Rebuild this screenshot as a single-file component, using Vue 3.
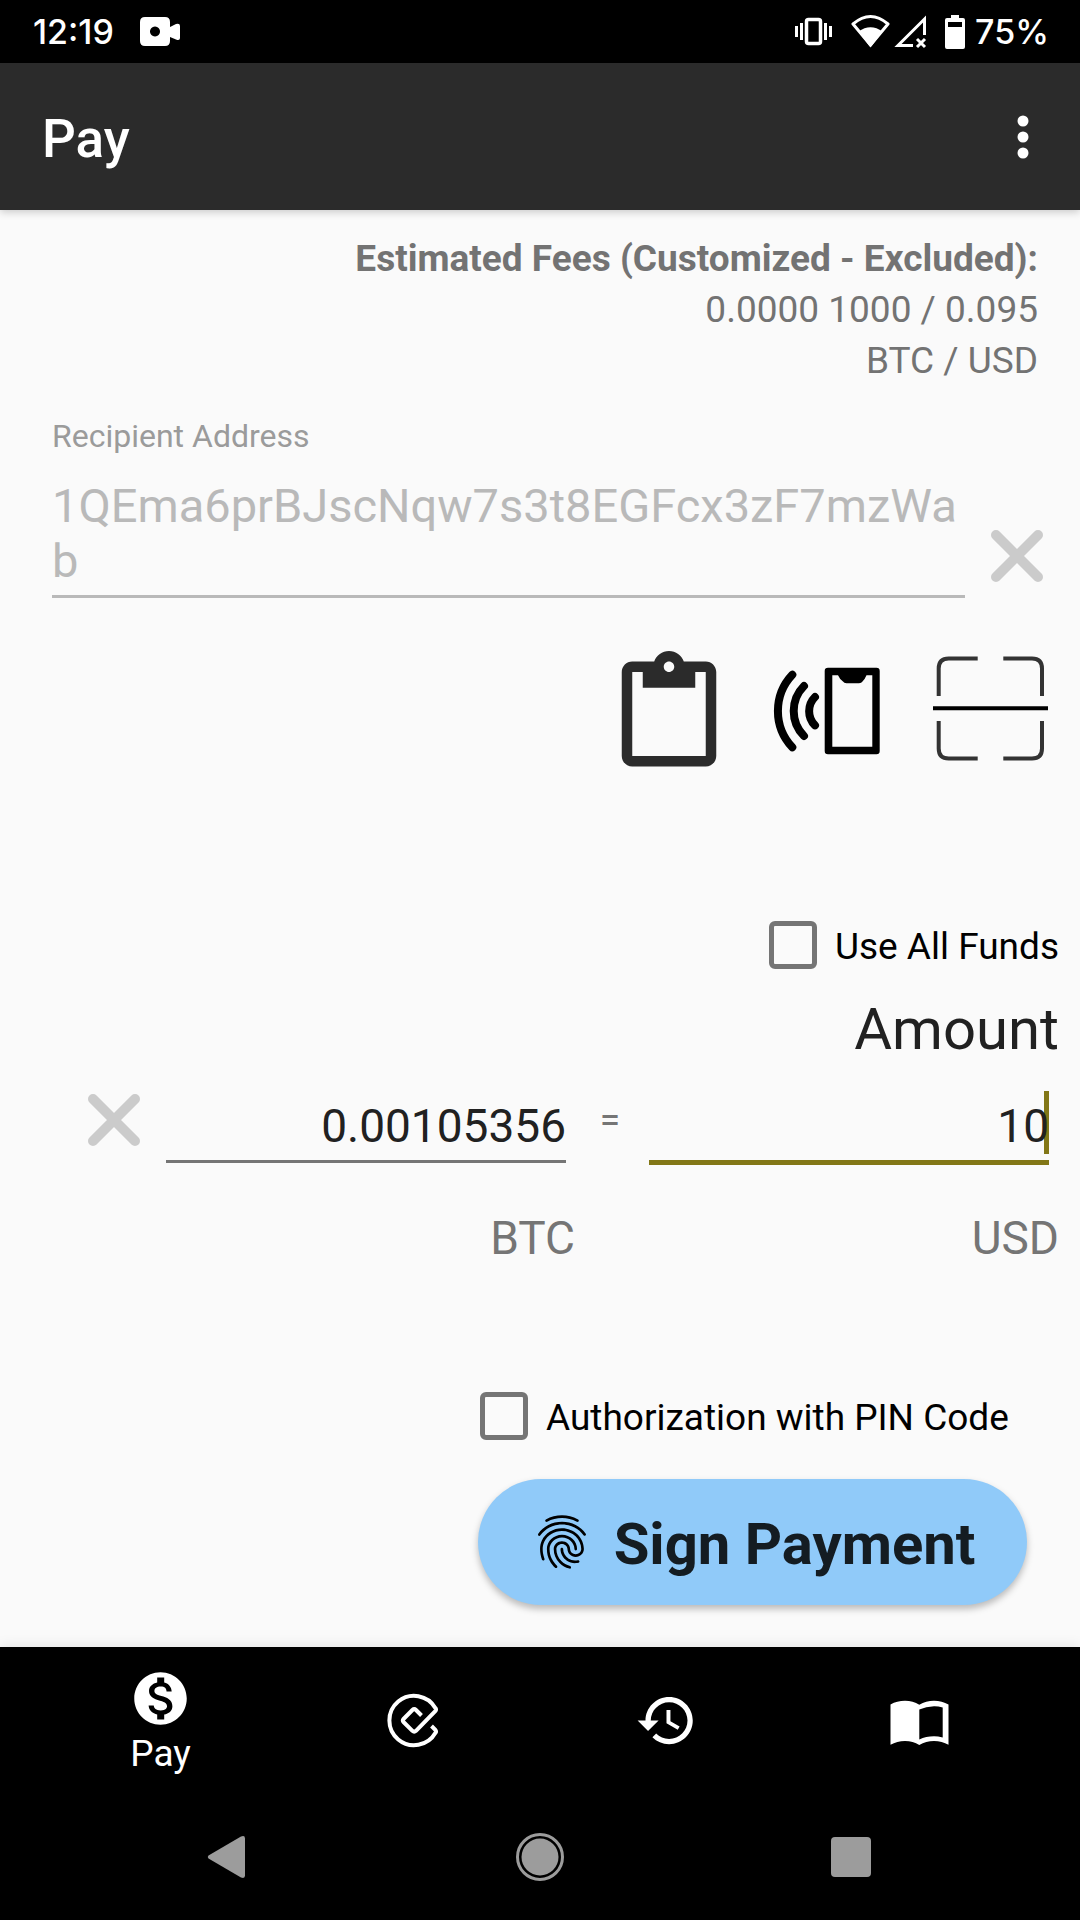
<script setup>
import { ref } from 'vue'

const address = ref('1QEma6prBJscNqw7s3t8EGFcx3zF7mzWab')
const btc = ref('0.00105356')
const usd = ref('10')
const useAll = ref(false)
const withPin = ref(false)
</script>

<template>
  <div class="screen">
    <div class="status">
      <div class="status-side">
        <span>12:19</span>
        <svg class="camera" width="40" height="34" viewBox="0 0 40 34" fill="#fff">
          <path fill-rule="evenodd" d="M5 2H25Q30 2 30 7V12L36 9Q40 8 40 11V23Q40 26 36 24.500L30 22V26Q30 31 25 31H5Q0 31 0 26V7Q0 2 5 2ZM15 11.500a5 5 0 1 0 .01 0Z" />
        </svg>
      </div>
      <div class="status-side">
        <svg width="38" height="36" viewBox="0 0 38 36" fill="#fff">
          <rect x="11.500" y="5.500" width="14" height="24" rx="2" fill="none" stroke="#fff" stroke-width="3.500" />
          <path d="M5 9h3v17H5zM0 12h3v11H0zM29 9h3v17h-3zM34 12h3v11h-3z" />
        </svg>
        <svg class="wifi" width="76" height="36" viewBox="0 0 76 36" fill="none" stroke="#fff">
          <path stroke-width="3" stroke-linejoin="round" d="M2 10Q19.500 -5 37 10L19.500 31Z" />
          <path fill="#fff" stroke="none" d="M7.500 17.500Q19.500 9 31.500 17.500L19.500 33.500Z" />
          <path stroke-width="3" d="M62 31.500H47L73.500 5V21" />
          <path stroke-width="3" d="M66 25l8 8M74 25l-8 8" />
        </svg>
        <svg class="battery" width="20" height="36" viewBox="0 0 20 36">
          <path fill="#fff" fill-rule="evenodd" d="M6 1h8v3h4q2 0 2 2v27q0 2-2 2H2q-2 0-2-2V6q0-2 2-2h4zM3 8v5h14V8z" />
        </svg>
        <span>75%</span>
      </div>
    </div>

    <header class="appbar">
      <h1>Pay</h1>
      <button class="more" aria-label="More options">
        <svg width="12" height="44" viewBox="0 0 12 44" fill="#fff">
          <circle cx="6" cy="6" r="5.500" /><circle cx="6" cy="22" r="5.500" /><circle cx="6" cy="38" r="5.500" />
        </svg>
      </button>
    </header>

    <main class="content">
      <div class="fees">
        <strong>Estimated Fees (Customized - Excluded):</strong>
        <span>0.0000 1000 / 0.095</span>
        <span>BTC / USD</span>
      </div>

      <div class="recipient">
        <div class="address">
          <label for="address">Recipient Address</label>
          <textarea id="address" v-model="address" rows="2" spellcheck="false" disabled></textarea>
        </div>
        <button class="clear" aria-label="Clear address" @click="address = ''">
          <svg width="52" height="52" viewBox="0 0 52 52"><path d="M5 5L47 47M47 5L5 47" /></svg>
        </button>
      </div>

      <div class="tools">
        <button aria-label="Paste">
          <svg viewBox="0 0 24 24" fill="#2b2b2b">
            <path d="M19 2h-4.180C14.400.84 13.300 0 12 0c-1.300 0-2.400.84-2.820 2H5c-1.100 0-2 .9-2 2v16c0 1.100.9 2 2 2h14c1.100 0 2-.9 2-2V4c0-1.100-.9-2-2-2zm-7 0c.55 0 1 .45 1 1s-.45 1-1 1-1-.45-1-1 .45-1 1-1zm7 18H5V4h2v3h10V4h2v16z" />
          </svg>
        </button>
        <button aria-label="Read with NFC">
          <svg viewBox="0 0 126 126" fill="none" stroke="#000">
            <path stroke-width="8" stroke-linecap="round" d="M25.300 23.700A53 53 0 0 0 25.300 96.300M37 35A35.500 35.500 0 0 0 37 85M48 46A20 20 0 0 0 48 74.300" />
            <path fill="#000" stroke="none" fill-rule="evenodd" d="M61 16.700H109.500Q112.700 16.700 112.700 20V100Q112.700 103.300 109.500 103.300H61Q57.700 103.300 57.700 100V20Q57.700 16.700 61 16.700ZM65.300 24.300V95.700H105.300V24.300H99.500Q98 28 95.500 30.500Q94.500 32.300 92 32.300H79.500Q77 32.300 76 30.500Q72.500 28 71 24.300Z" />
          </svg>
        </button>
        <button aria-label="Scan code">
          <svg viewBox="0 0 126 126" fill="none" stroke="#333" stroke-width="4">
            <path d="M10.700 45V17.500Q10.700 7.500 20.700 7.500H49.700M75.300 7.500H104Q114 7.500 114 17.500V45M10.700 70V97.500Q10.700 107.500 20.700 107.500H49.700M75.300 107.500H104Q114 107.500 114 97.500V70" />
            <path stroke="#000" d="M5 57.300H120" />
          </svg>
        </button>
      </div>

      <label class="check use-all">
        <input v-model="useAll" type="checkbox" />
        <span>Use All Funds</span>
      </label>

      <h2>Amount</h2>

      <div class="amounts">
        <button class="clear" aria-label="Clear amount" @click="btc = usd = ''">
          <svg width="52" height="52" viewBox="0 0 52 52"><path d="M5 5L47 47M47 5L5 47" /></svg>
        </button>
        <div class="field"><input id="btc" v-model="btc" type="text" inputmode="decimal" /></div>
        <span class="equals">=</span>
        <div class="field active">
          <i class="caret"></i>
          <input id="usd" v-model="usd" type="text" inputmode="decimal" />
        </div>
      </div>
      <div class="units">
        <label for="btc">BTC</label>
        <label for="usd">USD</label>
      </div>

      <div class="confirm">
        <label class="check">
          <input v-model="withPin" type="checkbox" />
          <span>Authorization with PIN Code</span>
        </label>
        <button class="sign">
          <svg width="64" height="64" viewBox="0 0 24 24">
            <path d="M17.810 4.470c-.08 0-.16-.02-.23-.06C15.660 3.420 14 3 12.010 3c-1.980 0-3.860.47-5.570 1.410-.24.13-.54.04-.68-.2-.13-.24-.04-.55.2-.68C7.820 2.520 9.860 2 12.010 2c2.130 0 3.990.47 6.030 1.520.25.13.34.43.21.67-.09.18-.26.28-.44.28zM3.500 9.720c-.1 0-.2-.03-.29-.09-.23-.16-.28-.47-.12-.7.99-1.400 2.250-2.500 3.750-3.270C9.980 4.040 14 4.030 17.150 5.650c1.500.77 2.760 1.860 3.750 3.250.16.22.11.54-.12.7-.23.16-.54.11-.7-.12-.9-1.260-2.040-2.250-3.390-2.940-2.870-1.470-6.540-1.470-9.400.01-1.360.7-2.500 1.700-3.400 2.960-.08.14-.23.21-.39.21zm6.250 12.070c-.13 0-.26-.05-.35-.15-.87-.87-1.340-1.430-2.010-2.640-.69-1.230-1.050-2.730-1.050-4.340 0-2.970 2.540-5.390 5.660-5.390s5.660 2.420 5.660 5.390c0 .28-.22.5-.5.5s-.5-.22-.5-.5c0-2.420-2.090-4.390-4.660-4.390-2.570 0-4.660 1.970-4.660 4.390 0 1.440.32 2.770.93 3.850.64 1.150 1.080 1.640 1.850 2.420.19.2.19.51 0 .71-.11.1-.24.15-.37.15zm7.170-1.850c-1.190 0-2.240-.3-3.100-.89-1.490-1.010-2.380-2.650-2.380-4.390 0-.28.22-.5.5-.5s.5.22.5.5c0 1.410.72 2.740 1.940 3.560.71.48 1.540.71 2.540.71.24 0 .64-.03 1.040-.1.27-.05.53.13.58.41.05.27-.13.53-.41.58-.57.11-1.070.12-1.210.12zM14.910 22c-.04 0-.09-.01-.13-.02-1.590-.44-2.630-1.030-3.720-2.100-1.400-1.390-2.170-3.240-2.170-5.220 0-1.620 1.380-2.940 3.080-2.940 1.700 0 3.080 1.320 3.080 2.940 0 1.070.93 1.940 2.080 1.940s2.080-.87 2.080-1.940c0-3.770-3.250-6.830-7.250-6.830-2.840 0-5.440 1.580-6.610 4.030-.39.81-.59 1.760-.59 2.800 0 .78.07 2.010.67 3.610.1.26-.03.55-.29.64-.26.1-.55-.04-.64-.29-.49-1.310-.73-2.610-.73-3.960 0-1.200.23-2.290.68-3.240 1.330-2.790 4.280-4.600 7.510-4.600 4.550 0 8.250 3.510 8.250 7.830 0 1.620-1.380 2.940-3.080 2.940s-3.080-1.320-3.080-2.940c0-1.070-.93-1.940-2.080-1.940s-2.080.87-2.080 1.940c0 1.710.66 3.310 1.870 4.510.95.94 1.860 1.460 3.270 1.850.27.07.42.35.35.61-.05.23-.26.38-.47.38z" />
          </svg>
          <span>Sign Payment</span>
        </button>
      </div>
    </main>

    <nav class="tabs">
      <a href="#pay">
        <svg width="63" height="63" viewBox="0 0 24 24" fill="#fff">
          <path d="M12 2C6.480 2 2 6.480 2 12s4.480 10 10 10 10-4.480 10-10S17.520 2 12 2zm1.410 16.090V20h-2.670v-1.930c-1.710-.36-3.160-1.460-3.270-3.400h1.960c.1 1.050.82 1.870 2.650 1.870 1.960 0 2.400-.98 2.400-1.590 0-.83-.44-1.610-2.670-2.140-2.480-.6-4.180-1.620-4.180-3.670 0-1.720 1.390-2.840 3.110-3.210V4h2.670v1.950c1.860.45 2.790 1.860 2.850 3.390H14.300c-.05-1.110-.64-1.870-2.220-1.870-1.500 0-2.400.68-2.400 1.640 0 .84.65 1.390 2.670 1.910s4.180 1.390 4.180 3.910c-.01 1.830-1.380 2.830-3.120 3.160z" />
        </svg>
        <span>Pay</span>
      </a>
      <a href="#confirm" aria-label="Confirm">
        <svg width="63" height="63" viewBox="0 0 63 63" fill="none" stroke="#fff" stroke-width="4">
          <path d="M49.500 37L53.500 41Q54.500 42.500 53.500 43.800A24.700 24.700 0 1 1 53.500 19.200Q54.500 20.700 53.500 21.800L34 41.800Q32.200 43.500 30.400 41.800L21.500 33Q20 31.500 21.500 30L30.400 21Q32.200 19.300 34 21L39.500 26.500" />
        </svg>
      </a>
      <a href="#history" aria-label="History">
        <svg width="63" height="63" viewBox="0 0 24 24" fill="#fff">
          <path d="M13 3c-4.970 0-9 4.030-9 9H1l3.890 3.890.07.14L9 12H6c0-3.870 3.130-7 7-7s7 3.130 7 7-3.130 7-7 7c-1.930 0-3.680-.79-4.940-2.060l-1.420 1.420C8.270 19.990 10.510 21 13 21c4.970 0 9-4.030 9-9s-4.030-9-9-9zm-1 5v5l4.280 2.540.72-1.210-3.500-2.080V8H12z" />
        </svg>
      </a>
      <a href="#contacts" aria-label="Address book">
        <svg width="63" height="63" viewBox="0 0 63 63" fill="#fff">
          <path fill-rule="evenodd" d="M2.500 15.500Q9 11.800 17 11.800Q25 12 31.300 15.800Q38 11.800 46 11.800Q54 12 60.500 15.500V55.800Q54 52 46 52Q38 52 31.300 56Q25 52 17 52Q9 52 2.500 55.800ZM31.300 20.500V50.500Q38 47.200 46 47.200Q50 47.200 54.700 48.500V18.500Q50 17.200 46 17.300Q38 17.500 31.300 20.500Z" />
        </svg>
      </a>
    </nav>

    <div class="system">
      <button aria-label="Back">
        <svg width="48" height="48" viewBox="0 0 48 48" fill="#9c9c9c">
          <path d="M3.500 22.500L36 3.500Q40 2 40 5.500V42.500Q40 46 36 44.500L3.500 25.500Q2 24 3.500 22.500Z" />
        </svg>
      </button>
      <button aria-label="Home">
        <svg width="48" height="48" viewBox="0 0 48 48" fill="#9c9c9c">
          <circle cx="24" cy="24" r="22.500" fill="none" stroke="#9c9c9c" stroke-width="3" /><circle cx="24" cy="24" r="18.500" />
        </svg>
      </button>
      <button aria-label="Recent apps">
        <svg width="48" height="48" viewBox="0 0 48 48" fill="#9c9c9c"><rect x="4" y="4" width="40" height="40" rx="4" /></svg>
      </button>
    </div>
  </div>
</template>

<style>
body { margin: 0; background: #000; }
</style>

<style scoped>
.screen {
  min-height: 100vh;
  display: flex;
  flex-direction: column;
  background: #fafafa;
  color: #212121;
  font-family: Roboto, "Liberation Sans", sans-serif;
  font-size: 37px;
}
svg { display: block; flex: none; }
button {
  display: flex;
  align-items: center;
  justify-content: center;
  padding: 0;
  border: 0;
  background: none;
  color: inherit;
  font: inherit;
}
h1, h2 { margin: 0; }

.status {
  box-sizing: border-box;
  height: 63px;
  padding: 0 31px 0 33px;
  display: flex;
  align-items: center;
  justify-content: space-between;
  background: #000;
  color: #fff;
  font-family: Inter, Roboto, sans-serif;
  font-size: 34px;
  font-weight: 500;
}
.status-side { display: flex; align-items: center; }
.camera { margin-left: 26px; }
.wifi { margin-left: 18px; }
.battery { margin: 0 10px 0 18px; }

.appbar {
  position: relative;
  box-sizing: border-box;
  height: 147px;
  padding: 0 31px 0 42px;
  display: flex;
  align-items: center;
  justify-content: space-between;
  background: #2b2b2b;
  color: #fff;
  box-shadow: 0 2px 8px rgba(0, 0, 0, 0.2);
}
.appbar h1 { padding-top: 4px; font-size: 53px; font-weight: 500; }
.more { width: 52px; height: 84px; }

.content {
  flex: 1;
  padding: 23px 0 42px;
  display: flex;
  flex-direction: column;
}
.fees {
  padding-right: 42px;
  display: flex;
  flex-direction: column;
  line-height: 51px;
  text-align: right;
  color: #737373;
}
.recipient {
  margin-top: 31px;
  padding: 0 37px 0 52px;
  display: flex;
  align-items: flex-end;
  gap: 26px;
}
.address { flex: 1; display: flex; flex-direction: column; gap: 23px; }
.address label { font-size: 32px; line-height: 38px; color: #9b9b9b; }
.address textarea {
  box-sizing: border-box;
  width: 100%;
  height: 120px;
  padding: 0;
  border: 0;
  border-bottom: 3px solid #b9b9b9;
  border-radius: 0;
  background: none;
  color: #b9b9b9;
  font: inherit;
  font-size: 47px;
  line-height: 55px;
  word-break: break-all;
  resize: none;
  overflow: hidden;
}
.clear svg { fill: none; stroke: #cbcbcb; stroke-width: 10; stroke-linecap: round; }
.recipient .clear { margin-bottom: 16px; }

.tools {
  margin-top: 53px;
  padding-right: 26px;
  display: flex;
  justify-content: flex-end;
  gap: 35px;
}
.tools svg { width: 126px; height: 126px; }

.check {
  display: flex;
  align-items: center;
  gap: 18px;
  line-height: 44px;
  color: #000;
}
.check span, .sign span, .tabs span { padding-top: 4px; }
.check input {
  appearance: none;
  box-sizing: border-box;
  width: 48px;
  height: 48px;
  margin: 0;
  border: 5px solid #757575;
  border-radius: 6px;
}
.use-all { align-self: flex-end; margin: 144px 21px 0 0; }
h2 {
  margin: 26px 21px 0 0;
  text-align: right;
  font-size: 58px;
  line-height: 68px;
  font-weight: 400;
}

.amounts {
  margin-top: 28px;
  padding: 0 31px 0 88px;
  display: flex;
  align-items: flex-start;
}
.amounts .clear { height: 58px; margin-right: 26px; }
.field { position: relative; flex: 1; height: 74px; }
.field input {
  position: relative;
  box-sizing: border-box;
  width: 100%;
  height: 72px;
  padding: 0;
  border: 0;
  border-bottom: 3px solid #757575;
  border-radius: 0;
  outline: 0;
  background: none;
  color: #212121;
  text-align: right;
  font: inherit;
  font-size: 46px;
}
.field.active input { height: 74px; border-bottom: 5px solid #827717; }
.caret {
  position: absolute;
  top: 0;
  right: 0;
  width: 5px;
  height: 63px;
  background: #827717;
}
.equals {
  box-sizing: border-box;
  width: 83px;
  padding-left: 5px;
  line-height: 58px;
  text-align: center;
  color: #757575;
}
.units {
  margin-top: 45px;
  padding: 0 21px 0 91px;
  display: grid;
  grid-template-columns: 1fr 1fr;
  font-size: 46px;
  line-height: 56px;
  text-align: right;
  color: #757575;
}

.confirm {
  align-self: flex-end;
  width: 549px;
  margin: 126px 53px 0 0;
  display: flex;
  flex-direction: column;
  gap: 39px;
}
.confirm .check { padding-left: 2px; }
.sign {
  height: 126px;
  border-radius: 63px;
  gap: 20px;
  background: #90caf9;
  color: #141c22;
  font-size: 58px;
  font-weight: 700;
  box-shadow: 0 4px 7px rgba(0, 0, 0, 0.26);
}
.sign svg { fill: #000; }

.tabs {
  height: 147px;
  padding: 0 34px;
  display: grid;
  grid-template-columns: repeat(4, 1fr);
  background: #000;
  box-shadow: 0 -2px 12px rgba(0, 0, 0, 0.08);
}
.tabs a {
  display: flex;
  flex-direction: column;
  align-items: center;
  justify-content: center;
  color: #fff;
  text-decoration: none;
  line-height: 40px;
}
.system {
  height: 126px;
  padding: 0 73px;
  display: grid;
  grid-template-columns: repeat(3, 1fr);
  background: #000;
}
</style>
